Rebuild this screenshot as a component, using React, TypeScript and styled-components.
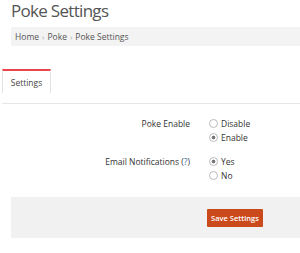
import React from "react";
import styled, { createGlobalStyle } from "styled-components";

const GlobalStyle = createGlobalStyle`
  body {
    margin: 0;
    background: #fff;
    font-family: "Open Sans", "Liberation Sans", sans-serif;
    color: #333;
  }
`;

type Option = { label: string; checked: boolean };

type Field = {
  label: string;
  help?: boolean;
  options: Option[];
};

const fields: Field[] = [
  {
    label: "Poke Enable",
    options: [
      { label: "Disable", checked: false },
      { label: "Enable", checked: true },
    ],
  },
  {
    label: "Email Notifications",
    help: true,
    options: [
      { label: "Yes", checked: true },
      { label: "No", checked: false },
    ],
  },
];

const Radio: React.FC<Option> = ({ label, checked }) => (
  <OptionRow>
    <Circle checked={checked} />
    <span>{label}</span>
  </OptionRow>
);

const App: React.FC = () => {
  return (
    <Page>
      <GlobalStyle />
      <Title>Poke Settings</Title>
      <Breadcrumb>
        <span>Home</span>
        <Sep>›</Sep>
        <span>Poke</span>
        <Sep>›</Sep>
        <span>Poke Settings</span>
      </Breadcrumb>

      <Tabs>
        <Tab active>Settings</Tab>
      </Tabs>

      <Form>
        {fields.map(f => (
          <FieldRow key={f.label}>
            <Label>
              {f.label}
              {f.help && (
                <>
                  {" "}(<Help>?</Help>)
                </>
              )}
            </Label>
            <Options>
              {f.options.map(o => (
                <Radio key={o.label} {...o} />
              ))}
            </Options>
          </FieldRow>
        ))}
      </Form>

      <Footer>
        <SaveButton>Save Settings</SaveButton>
      </Footer>
    </Page>
  );
};

export default App;

const Page = styled.div`
  width: 300px;
  height: 253px;
  overflow: hidden;
`;

const Title = styled.h1`
  margin: 0 0 0 11px;
  font-size: 17px;
  line-height: 21px;
  font-weight: 400;
  letter-spacing: -0.7px;
  color: #555;
`;

const Breadcrumb = styled.div`
  margin: 6px 0 0 11px;
  height: 19px;
  display: flex;
  align-items: center;
  gap: 3px;
  padding-left: 4px;
  background: #f3f3f3;
  font-size: 8.5px;
  color: #555;
`;

const Sep = styled.span`
  color: #aaa;
  font-size: 8px;
`;

const Tabs = styled.div`
  margin: 23px 0 0 2px;
  display: flex;
`;

interface TabProps {
  active?: boolean;
}

const Tab = styled.div<TabProps>`
  width: 47px;
  height: 22px;
  box-sizing: content-box;
  display: flex;
  align-items: center;
  justify-content: center;
  border-top: 2px solid ${p => (p.active ? "#e9454e" : "#ddd")};
  border-left: 1px solid #e3e3e3;
  border-right: 1px solid #e3e3e3;
  font-size: 8.5px;
  color: #444;
`;

const Form = styled.div`
  margin: 10px 0 0 2px;
  border-top: 1px solid #e6e6e6;
  padding-top: 12px;
  display: flex;
  flex-direction: column;
  gap: 9px;
`;

const FieldRow = styled.div`
  display: grid;
  grid-template-columns: 188px 1fr;
  column-gap: 19px;
  align-items: start;
`;

const Label = styled.div`
  text-align: right;
  font-size: 8.5px;
  line-height: 14px;
  color: #333;
  padding-top: 1px;
`;

const Help = styled.span`
  color: #2a6fb0;
`;

const Options = styled.div`
  display: flex;
  flex-direction: column;
`;

const OptionRow = styled.div`
  display: flex;
  align-items: center;
  gap: 3px;
  height: 14.5px;
  font-size: 8.5px;
  color: #333;
`;

interface CircleProps {
  checked: boolean;
}

const Circle = styled.span<CircleProps>`
  width: 7px;
  height: 7px;
  border-radius: 50%;
  border: 1px solid #bbb;
  background: ${p =>
    p.checked ? "radial-gradient(circle, #777 0 1.6px, #fff 2.2px)" : "#fff"};
`;

const Footer = styled.div`
  margin: 14px 0 0 11px;
  height: 41px;
  box-sizing: border-box;
  padding: 12px 0 0 196px;
  display: flex;
  align-items: flex-start;
  background: #f1f1f1;
`;

const SaveButton = styled.button`
  width: 56px;
  height: 18px;
  padding: 0;
  border: none;
  border-radius: 1px;
  background: #cb4a1b;
  color: #fff;
  font-family: "Open Sans", "Liberation Sans", sans-serif;
  font-size: 7.5px;
  font-weight: 600;
  cursor: pointer;
`;
